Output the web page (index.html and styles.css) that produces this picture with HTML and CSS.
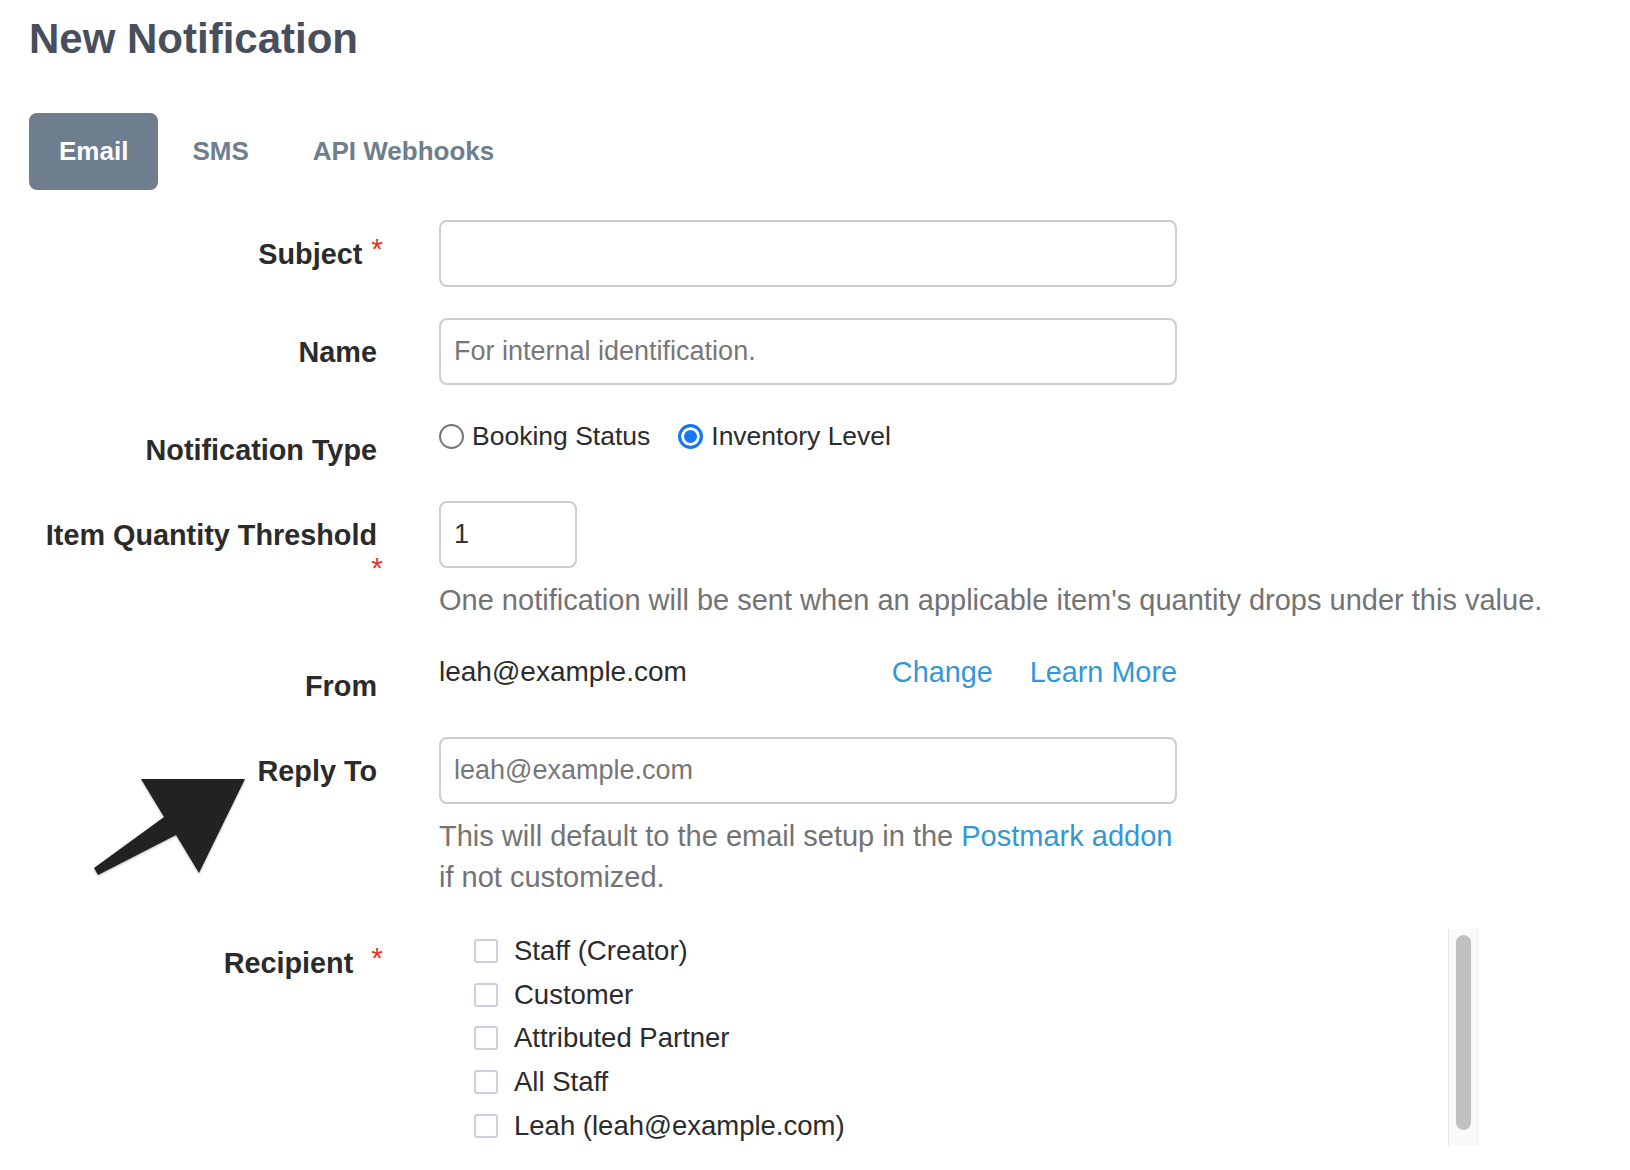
FILE: index.html
```html
<!DOCTYPE html>
<html lang="en">
<head>
  <meta charset="UTF-8" />
  <title>New Notification</title>
  <link rel="stylesheet" href="styles.css">
</head>
<body>

  <h1 class="page-title">New Notification</h1>

  <nav class="tabs">
    <a class="tab active" href="#">Email</a>
    <a class="tab" href="#">SMS</a>
    <a class="tab" href="#">API Webhooks</a>
  </nav>

  <form class="notify-form">
    <div class="row">
      <label class="field-label">Subject<span class="req">*</span></label>
      <div class="control">
        <input class="text-input" type="text" />
      </div>
    </div>

    <div class="row">
      <label class="field-label">Name</label>
      <div class="control">
        <input class="text-input" type="text" placeholder="For internal identification." />
      </div>
    </div>

    <div class="row">
      <label class="field-label">Notification Type</label>
      <div class="control radios">
        <label class="radio"><input type="radio" name="type" /> Booking Status</label>
        <label class="radio"><input type="radio" name="type" checked /> Inventory Level</label>
      </div>
    </div>

    <div class="row">
      <label class="field-label">Item Quantity Threshold<span class="req below">*</span></label>
      <div class="control">
        <input class="text-input small" type="text" value="1" />
        <p class="help">One notification will be sent when an applicable item's quantity drops under this value.</p>
      </div>
    </div>

    <div class="row">
      <label class="field-label">From</label>
      <div class="control from">
        <span>leah@example.com</span>
        <span class="links">
          <a href="#">Change</a>
          <a href="#">Learn More</a>
        </span>
      </div>
    </div>

    <div class="row">
      <label class="field-label">Reply To</label>
      <div class="control">
        <input class="text-input" type="text" placeholder="leah@example.com" />
        <p class="help narrow">This will default to the email setup in the <a href="#">Postmark addon</a> if not customized.</p>
      </div>
    </div>

    <div class="row">
      <label class="field-label">Recipient<span class="req wide">*</span></label>
      <div class="control recipients">
        <ul class="checklist">
          <li><label><input type="checkbox" /> Staff (Creator)</label></li>
          <li><label><input type="checkbox" /> Customer</label></li>
          <li><label><input type="checkbox" /> Attributed Partner</label></li>
          <li><label><input type="checkbox" /> All Staff</label></li>
          <li><label><input type="checkbox" /> Leah (leah@example.com)</label></li>
        </ul>
        <div class="scroll-track"><div class="scroll-thumb"></div></div>
      </div>
    </div>
  </form>

  <svg class="pointer-arrow" width="160" height="110" viewBox="0 0 160 110">
    <polygon points="155,4 51,4 74,42 4,93 8,100 86,60 109,98" fill="#222" />
  </svg>

</body>
</html>
```

FILE: styles.css
```css
* {
  box-sizing: border-box;
}

body {
  margin: 0;
  padding: 15px 29px 0;
  font-family: 'Liberation Sans', Arial, sans-serif;
  font-size: 28px;
  color: #2b2b2b;
  background: #fff;
  position: relative;
  overflow: hidden;
}

.page-title {
  margin: 0;
  font-size: 42px;
  line-height: 48px;
  font-weight: bold;
  color: #464f5b;
}

.tabs {
  display: flex;
  gap: 4px;
  margin-top: 50px;
}

.tab {
  display: flex;
  align-items: center;
  height: 77px;
  padding: 0 30px;
  border-radius: 8px;
  font-size: 26px;
  font-weight: bold;
  color: #6e7e8e;
  text-decoration: none;
}

.tab.active {
  background: #6e7e8e;
  color: #fff;
}

.notify-form {
  margin-top: 30px;
}

.row {
  display: grid;
  grid-template-columns: 354px 1fr;
  column-gap: 56px;
  align-items: start;
  margin-bottom: 31px;
}

.field-label {
  padding: 14px 6px 0 0;
  text-align: right;
  font-size: 28.8px;
  font-weight: bold;
  line-height: 40px;
  color: #2b2b2b;
}

.req {
  color: #e5371f;
  font-weight: normal;
  font-size: 30px;
  line-height: 0;
  vertical-align: 5px;
  margin-left: 9px;
  margin-right: -6px;
}

.req.wide {
  margin-left: 18px;
}

.req.below {
  display: block;
  line-height: 26px;
}

.control {
  line-height: 40px;
}

.text-input {
  display: block;
  width: 738px;
  height: 67px;
  padding: 0 13px;
  border: 2px solid #cdcdcd;
  border-radius: 8px;
  font-family: inherit;
  font-size: 27px;
  color: #333;
  background: #fff;
}

.text-input::placeholder {
  color: #777;
}

.text-input.small {
  width: 138px;
}

.help {
  margin: 12px 0 0;
  font-size: 29px;
  line-height: 41px;
  color: #737373;
}

.help.narrow {
  max-width: 742px;
}

a {
  color: #3397d6;
  text-decoration: none;
}

.radios {
  display: flex;
  align-items: flex-start;
  gap: 28px;
}

.radio {
  display: flex;
  align-items: center;
  gap: 8px;
  height: 40px;
  font-size: 26.5px;
}

.radio input {
  appearance: none;
  margin: 0;
  width: 25px;
  height: 25px;
  border: 2px solid #777;
  border-radius: 50%;
  background: #fff;
}

.radio input:checked {
  border: 3px solid #1477f4;
  background: #1477f4;
  box-shadow: inset 0 0 0 3px #fff;
}

.from {
  display: flex;
  justify-content: space-between;
  width: 738px;
}

.links {
  display: flex;
  gap: 37px;
  font-size: 28.8px;
}

.recipients {
  display: flex;
  width: 1039px;
  height: 217px;
}

.checklist {
  flex: 1;
  list-style: none;
  margin: 0;
  padding: 0 0 0 35px;
  overflow: hidden;
}

.checklist li {
  height: 43.7px;
}

.checklist label {
  display: flex;
  align-items: center;
  gap: 16px;
  height: 100%;
  font-size: 27.5px;
}

.checklist input {
  appearance: none;
  margin: 0;
  width: 24px;
  height: 24px;
  border: 2px solid #cfcde0;
  border-radius: 3px;
  background: #fff;
}

.scroll-track {
  width: 30px;
  padding: 6px 6px 0 7px;
  background: #fafafa;
  border-left: 1px solid #e6e6e6;
  border-right: 1px solid #eeeeee;
}

.scroll-thumb {
  height: 195px;
  border-radius: 8px;
  background: #c1c1c1;
}

.pointer-arrow {
  position: absolute;
  left: 90px;
  top: 775px;
  filter: drop-shadow(0 1px 1px rgba(0, 0, 0, 0.3));
}
```
